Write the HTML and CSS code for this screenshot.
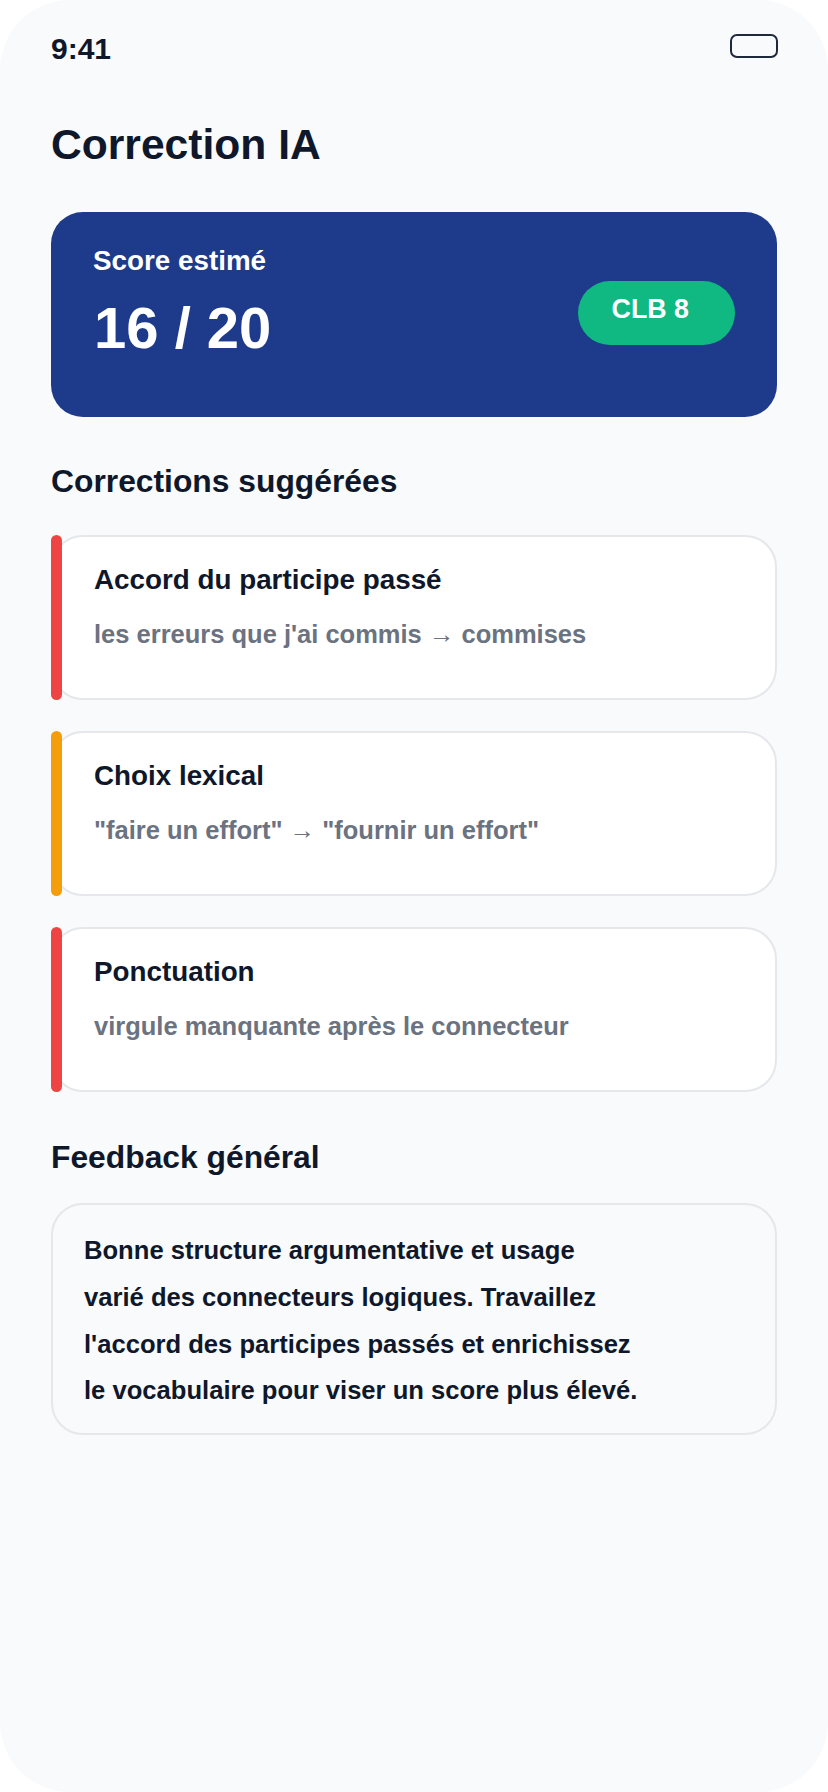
FILE: index.html
```html
<!DOCTYPE html>
<html lang="fr">
<head>
<meta charset="utf-8">
<title>Correction IA</title>
<link rel="stylesheet" href="styles.css">
</head>
<body>
<div class="phone">
  <div class="status">
    <span class="time">9:41</span>
    <span class="battery"></span>
  </div>

  <h1 class="title">Correction IA</h1>

  <section class="score-card">
    <div class="score-info">
      <div class="score-label">Score estimé</div>
      <div class="score-value">16 / 20</div>
    </div>
    <div class="badge">CLB 8</div>
  </section>

  <h2 class="section-title">Corrections suggérées</h2>

  <div class="corrections">
    <div class="correction correction--red">
      <div class="correction-title">Accord du participe passé</div>
      <div class="correction-text">les erreurs que j'ai commis → commises</div>
    </div>
    <div class="correction correction--orange">
      <div class="correction-title">Choix lexical</div>
      <div class="correction-text">"faire un effort" → "fournir un effort"</div>
    </div>
    <div class="correction correction--red">
      <div class="correction-title">Ponctuation</div>
      <div class="correction-text">virgule manquante après le connecteur</div>
    </div>
  </div>

  <h2 class="section-title section-title--feedback">Feedback général</h2>

  <div class="feedback">
    Bonne structure argumentative et usage<br>
    varié des connecteurs logiques. Travaillez<br>
    l'accord des participes passés et enrichissez<br>
    le vocabulaire pour viser un score plus élevé.
  </div>
</div>
</body>
</html>
```

FILE: styles.css
```css
* {
  box-sizing: border-box;
  margin: 0;
  padding: 0;
}

body {
  background: #ffffff;
  font-family: "Liberation Sans", Arial, sans-serif;
  font-weight: 700;
  color: #0f172a;
}

.phone {
  width: 828px;
  height: 1792px;
  background: #f8fafc;
  border-radius: 70px;
  overflow: hidden;
  padding: 32px 51px 0 51px;
}

.status {
  display: flex;
  justify-content: space-between;
  align-items: flex-start;
}

.time {
  font-size: 30px;
  line-height: 34px;
}

.battery {
  width: 48px;
  height: 24px;
  border: 2px solid #1e293b;
  border-radius: 7px;
  margin-top: 2px;
  margin-right: -1px;
}

.title {
  font-size: 42.6px;
  line-height: 48px;
  margin-top: 53.6px;
  font-weight: 700;
}

.score-card {
  margin-top: 44.3px;
  height: 205px;
  background: #1e3a8a;
  border-radius: 32px;
  padding: 33px 42px 0 42px;
  display: flex;
  justify-content: space-between;
  align-items: flex-start;
  color: #ffffff;
}

.score-label {
  font-size: 27.8px;
  line-height: 32px;
}

.score-value {
  font-size: 58px;
  line-height: 64px;
  margin-top: 19.5px;
  margin-left: 1px;
}

.badge {
  margin-top: 35.7px;
  height: 64px;
  background: #10b981;
  border-radius: 32px;
  padding: 13.3px 46px 0 34px;
  font-size: 26.8px;
  line-height: 30px;
}

.section-title {
  font-size: 31.8px;
  line-height: 38px;
  margin-top: 44.75px;
  font-weight: 700;
}

.section-title--feedback {
  margin-top: 45.75px;
}

.corrections {
  margin-top: 35.25px;
  display: flex;
  flex-direction: column;
  gap: 30.5px;
}

.correction {
  position: relative;
  height: 165.5px;
  background: #ffffff;
  border: 2px solid #e5e7eb;
  border-radius: 32px;
  padding: 26.4px 41px 0 41px;
}

.correction::before {
  content: "";
  position: absolute;
  left: -2px;
  top: -2px;
  bottom: -2px;
  width: 11px;
  border-radius: 6px;
}

.correction--red::before {
  background: #ef4444;
}

.correction--orange::before {
  background: #f59e0b;
}

.correction-title {
  font-size: 27.8px;
  line-height: 34px;
}

.correction-text {
  font-size: 25.5px;
  line-height: 32px;
  margin-top: 20.5px;
  color: #6b7280;
}

.feedback {
  margin-top: 26.5px;
  border: 2px solid #e5e7eb;
  border-radius: 32px;
  padding: 22.6px 31px 19.3px 31px;
  font-size: 25.6px;
  line-height: 46.7px;
}
```
